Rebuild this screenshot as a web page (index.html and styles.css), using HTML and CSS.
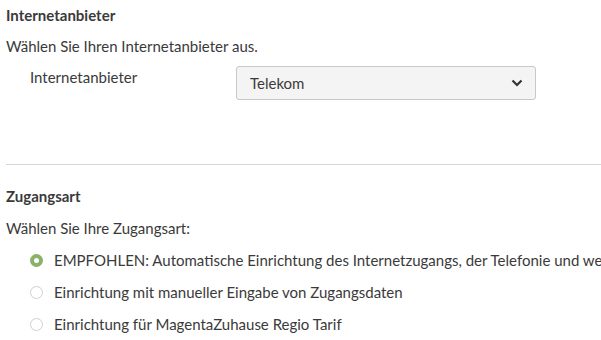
FILE: index.html
```html
<!DOCTYPE html>
<html lang="de">
<head>
    <meta charset="UTF-8">
    <title>Internetzugang</title>
    <link rel="stylesheet" href="styles.css">
</head>
<body>

<div class="page">
    <!-- Internetanbieter -->
    <section class="block">
        <h3>Internetanbieter</h3>
        <p class="hint">Wählen Sie Ihren Internetanbieter aus.</p>
        <div class="form-row">
            <label class="form-label">Internetanbieter</label>
            <div class="select">
                <span>Telekom</span>
                <svg class="chevron" width="12" height="8" viewBox="0 0 12 8">
                    <path d="M1.5 1.5 L6 6 L10.5 1.5" fill="none" stroke="#333" stroke-width="2.2"/>
                </svg>
            </div>
        </div>
    </section>

    <hr class="divider">

    <!-- Zugangsart -->
    <section class="block">
        <h3>Zugangsart</h3>
        <p class="hint">Wählen Sie Ihre Zugangsart:</p>
        <ul class="radios">
            <li class="radio checked"><span class="dot"></span>EMPFOHLEN: Automatische Einrichtung des Internetzugangs, der Telefonie und weiterer Dienste</li>
            <li class="radio"><span class="dot"></span>Einrichtung mit manueller Eingabe von Zugangsdaten</li>
            <li class="radio"><span class="dot"></span>Einrichtung für MagentaZuhause Regio Tarif</li>
        </ul>
    </section>
</div>

</body>
</html>
```

FILE: styles.css
```css
body {
    margin: 0;
    padding: 0;
    background: #fff;
    color: #3a3a3a;
    font-family: Lato, "Liberation Sans", sans-serif;
    font-size: 15px;
    overflow: hidden;
}

.page {
    padding: 5px 0 0 6px;
    width: 700px;
}

h3 {
    margin: 0;
    font-size: 15px;
    font-weight: bold;
    line-height: 20px;
}

.hint {
    margin: 11px 0 0 0;
    line-height: 20px;
}

.form-row {
    display: flex;
    align-items: flex-start;
    margin-top: 10px;
    padding-left: 24px;
}

.form-label {
    width: 206px;
    line-height: 22px;
}

.select {
    width: 300px;
    height: 34px;
    box-sizing: border-box;
    border: 1px solid #c8c8c8;
    border-radius: 3px;
    background: #f4f4f4;
    display: flex;
    align-items: center;
    justify-content: space-between;
    padding: 0 12px 0 13px;
}

.divider {
    border: none;
    border-top: 1px solid #d6d6d6;
    margin: 64px 0 0 0;
    width: 595px;
}

.block + .divider + .block {
    padding-top: 21px;
}

.block + .divider + .block .hint {
    margin-top: 12px;
}

.radios {
    list-style: none;
    margin: 6px 0 0 0;
    padding: 0 0 0 24px;
}

.radio {
    display: flex;
    align-items: center;
    height: 32px;
    white-space: nowrap;
}

.dot {
    width: 13px;
    height: 13px;
    box-sizing: border-box;
    border: 1px solid #cfcfcf;
    border-radius: 50%;
    margin-right: 11px;
    flex-shrink: 0;
}

.radio.checked .dot {
    border: 4px solid #8ab26a;
    background: #fff;
}
```
